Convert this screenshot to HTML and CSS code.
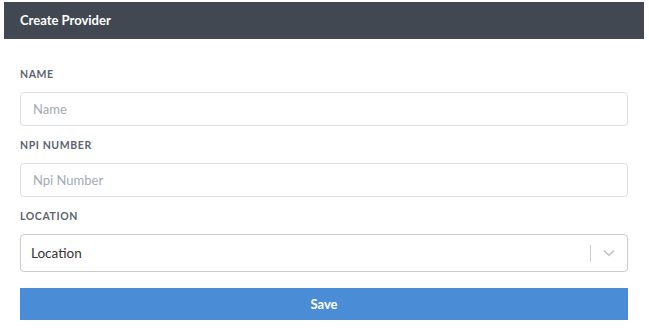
FILE: index.html
```html
<!DOCTYPE html>
<html>
<head>
<meta charset="utf-8">
<link rel="stylesheet" href="styles.css">
</head>
<body>
<div class="page">
  <div class="modal">
    <div class="modal-header">Create Provider</div>
    <form class="form">
      <div class="field">
        <label class="label">Name</label>
        <input class="input" type="text" placeholder="Name">
      </div>
      <div class="field">
        <label class="label">Npi Number</label>
        <input class="input" type="text" placeholder="Npi Number">
      </div>
      <div class="field">
        <label class="label">Location</label>
        <div class="select">
          <span class="select-value">Location</span>
          <span class="select-sep"></span>
          <span class="select-arrow">
            <svg width="20" height="20" viewBox="0 0 20 20"><path d="M5.5 8 L10 12.3 L14.5 8" fill="none" stroke="#c4c4c4" stroke-width="1.6" stroke-linecap="round" stroke-linejoin="round"/></svg>
          </span>
        </div>
      </div>
      <button class="save" type="button">Save</button>
    </form>
  </div>
</div>
</body>
</html>
```

FILE: styles.css
```css
html, body {
  margin: 0;
  padding: 0;
  background: #ffffff;
}
body {
  font-family: Lato, "Open Sans", sans-serif;
}
.page {
  padding: 2px 5px 0 4px;
}
.modal {
  background: #fff;
}
.modal-header {
  height: 37px;
  background: #414852;
  color: #ffffff;
  font-weight: 700;
  font-size: 13px;
  line-height: 37px;
  padding: 0 16px;
}
.form {
  padding: 27px 16px 0 16px;
  display: flex;
  flex-direction: column;
}
.field {
  display: flex;
  flex-direction: column;
  margin-bottom: 11px;
}
.label {
  display: block;
  height: 16px;
  line-height: 16px;
  font-size: 10.5px;
  font-weight: 700;
  letter-spacing: 0.6px;
  text-transform: uppercase;
  color: #5c6370;
  margin-bottom: 10px;
}
.input {
  box-sizing: border-box;
  height: 34px;
  width: 100%;
  border: 1px solid #dde1e6;
  border-radius: 4px;
  padding: 0 12px;
  font-family: Lato, "Open Sans", sans-serif;
  font-size: 13px;
  color: #333;
  outline: none;
}
.input::placeholder {
  color: #a3aab3;
}
.select {
  box-sizing: border-box;
  height: 38px;
  border: 1px solid #cccccc;
  border-radius: 4px;
  display: flex;
  align-items: center;
  padding-left: 10px;
}
.select-value {
  flex: 1;
  font-size: 13.5px;
  color: #333333;
}
.select-sep {
  width: 1px;
  height: 17px;
  background: #cccccc;
}
.select-arrow {
  width: 36px;
  display: flex;
  align-items: center;
  justify-content: center;
}
.select-arrow svg {
  display: block;
}
.save {
  margin-top: 5px;
  height: 32px;
  border: none;
  background: #4a8cd6;
  color: #ffffff;
  font-family: Lato, "Open Sans", sans-serif;
  font-weight: 700;
  font-size: 13px;
  padding: 0;
}
```
